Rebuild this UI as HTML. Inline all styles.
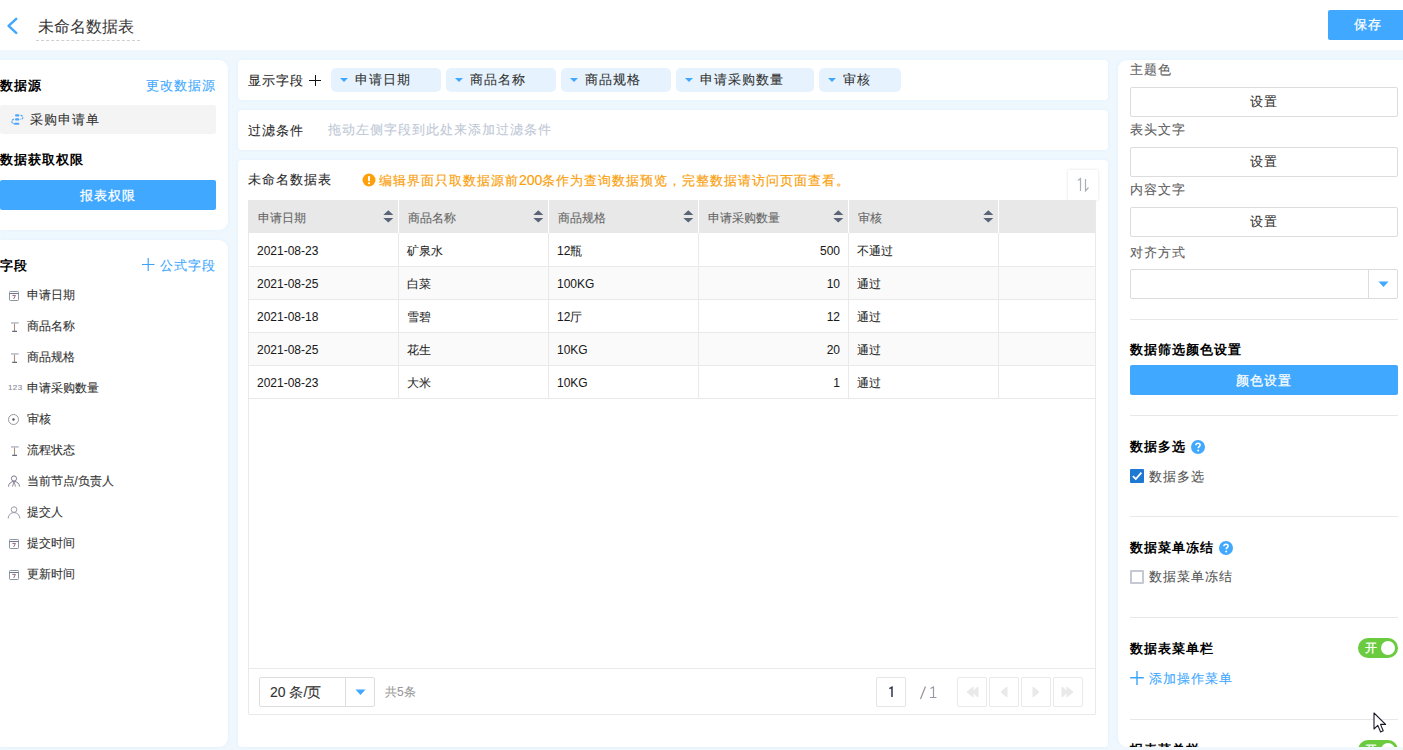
<!DOCTYPE html>
<html><head><meta charset="utf-8">
<style>
*{box-sizing:border-box;margin:0;padding:0}
html,body{width:1403px;height:750px;overflow:hidden}
body{position:relative;-webkit-text-stroke:0.1px currentColor;background:#fff;font-family:"Liberation Sans",sans-serif;color:#333;font-size:13px;letter-spacing:1px;line-height:20px;color:#2a2a2a}
.a{position:absolute;white-space:nowrap}
.bg{position:absolute;left:0;top:50px;width:1403px;height:700px;background:#f0f8fe}
.card{position:absolute;background:#fff;box-shadow:0 0 5px rgba(130,190,250,.13)}
.b{font-weight:bold;color:#000;-webkit-text-stroke:0}
.blue{color:#40a8fe}
.btnb{position:absolute;background:#40a8fe;color:#fff;text-align:center;border-radius:2px;-webkit-text-stroke:0.25px #fff}
.fld{position:absolute;left:26.5px;font-size:12px;letter-spacing:0;color:#333}
.ic{position:absolute;left:8px}

.chip{top:68px;height:24px;background:#e6f3fe;border-radius:5px;padding-left:24px;line-height:24px;color:#333}
.chip:before{content:"";position:absolute;left:9px;top:10px;border-left:4px solid transparent;border-right:4px solid transparent;border-top:4.5px solid #40a8fe}
.th{top:208px;font-size:12px;letter-spacing:0;color:#666}
.td{height:33px;line-height:33px;font-size:12px;letter-spacing:0;color:#1a1a1a;-webkit-text-stroke:0.05px #1a1a1a}
.pg{top:677px;width:30px;height:30px;border:1px solid #e9e9e9;border-radius:2px;background:#fff}
.pg svg{position:absolute;left:0;top:0}
.lbl{left:1130px;color:#606060}
.sbtn{left:1130px;width:268px;height:30px;border:1px solid #dcdcdc;border-radius:2px;background:#fff;text-align:center;line-height:28px;color:#333}
.hr{left:1130px;width:268px;height:1px;background:#e8e8e8}
.tg{left:1357.5px;width:40.5px;height:20px;border-radius:10px;background:#6bcb3f}
.tg span{position:absolute;left:7.5px;top:0;line-height:20px;font-size:12px;letter-spacing:0;color:#fff;-webkit-text-stroke:0.3px #fff}
.tg i{position:absolute;right:3px;top:3px;width:14px;height:14px;border-radius:50%;background:#fff}
</style></head><body>
<!-- header -->
<svg class="a" style="left:5px;top:17px" width="14" height="18" viewBox="0 0 14 18"><path d="M11.2 1.8 L3.6 8.8 L11.2 15.8" fill="none" stroke="#40a8fe" stroke-width="2.5" stroke-linecap="round" stroke-linejoin="round"/></svg>
<div class="a" style="left:38px;top:17px;font-size:16px;letter-spacing:0;color:#333;-webkit-text-stroke:0">未命名数据表</div>
<div class="a" style="left:36px;top:40px;width:104px;height:1px;border-top:1px dashed #d0d0d0"></div>
<div class="btnb" style="left:1328px;top:10px;width:80px;height:30px;line-height:30px;padding-right:1px">保存</div>

<div class="bg"></div>

<!-- left card 1 -->
<div class="card" style="left:0;top:60px;width:228px;height:170px;border-radius:0 9px 9px 0"></div>
<div class="a b" style="left:0;top:76px">数据源</div>
<div class="a blue" style="left:146px;top:76px">更改数据源</div>
<div class="a" style="left:0;top:105px;width:216px;height:29px;background:#f4f4f4;border-radius:3px"></div>
<div class="a" style="left:30px;top:110px;color:#333">采购申请单</div>
<div class="a b" style="left:0;top:150px">数据获取权限</div>
<div class="btnb" style="left:0;top:180px;width:216px;height:30px;line-height:31px">报表权限</div>

<!-- left card 2 -->
<div class="card" style="left:0;top:240px;width:228px;height:507px;border-radius:0 9px 9px 0"></div>
<div class="a b" style="left:0;top:256px">字段</div>
<div class="a blue" style="left:160px;top:256px">公式字段</div>
<div class="fld a" style="top:285px">申请日期</div>
<div class="fld a" style="top:316px">商品名称</div>
<div class="fld a" style="top:347px">商品规格</div>
<div class="fld a" style="top:378px">申请采购数量</div>
<div class="fld a" style="top:409px">审核</div>
<div class="fld a" style="top:440px">流程状态</div>
<div class="fld a" style="top:471px">当前节点/负责人</div>
<div class="fld a" style="top:502px">提交人</div>
<div class="fld a" style="top:533px">提交时间</div>
<div class="fld a" style="top:564px">更新时间</div>

<svg class="a" style="left:8px;top:290px" width="12" height="12" viewBox="0 0 12 12"><rect x="1.5" y="1.5" width="9" height="9" rx="0.8" fill="none" stroke="#8c96a2" stroke-width="1"/><path d="M1.5 3.5H10.5" stroke="#6e7886" stroke-width="1"/><path d="M4.4 5.4H7.4L5.7 9" fill="none" stroke="#8a6a80" stroke-width="1"/></svg><svg class="a" style="left:10px;top:321px" width="10" height="12" viewBox="0 0 10 12"><path d="M1 1.9H8.7" stroke="#b4bac6" stroke-width="1.5"/><path d="M4.5 2.6V9.8" stroke="#a89080" stroke-width="1.1"/><path d="M2.2 10.3H7" stroke="#4a5060" stroke-width="1.1"/></svg><svg class="a" style="left:10px;top:352px" width="10" height="12" viewBox="0 0 10 12"><path d="M1 1.9H8.7" stroke="#b4bac6" stroke-width="1.5"/><path d="M4.5 2.6V9.8" stroke="#a89080" stroke-width="1.1"/><path d="M2.2 10.3H7" stroke="#4a5060" stroke-width="1.1"/></svg><div class="a" style="left:8px;top:383px;font-size:8px;line-height:10px;color:#8a8a9a;letter-spacing:0.4px">123</div><svg class="a" style="left:7px;top:413px" width="13" height="13" viewBox="0 0 13 13"><circle cx="6.5" cy="6.5" r="5" fill="none" stroke="#9a96a0" stroke-width="1"/><circle cx="6.5" cy="6.5" r="1.2" fill="#556"/></svg><svg class="a" style="left:10px;top:445px" width="10" height="12" viewBox="0 0 10 12"><path d="M1 1.9H8.7" stroke="#b4bac6" stroke-width="1.5"/><path d="M4.5 2.6V9.8" stroke="#a89080" stroke-width="1.1"/><path d="M2.2 10.3H7" stroke="#4a5060" stroke-width="1.1"/></svg><svg class="a" style="left:7px;top:474px" width="14" height="14" viewBox="0 0 14 14"><circle cx="7" cy="4.5" r="2.6" fill="none" stroke="#7c7c92" stroke-width="1"/><path d="M1.4 12.6 C1.8 9.6 4 7.4 7 7.4 C10 7.4 12.2 9.6 12.6 12.6" fill="none" stroke="#7c7c92" stroke-width="1"/><path d="M5.5 12.6 L7 7.4 L8.5 12.6" fill="none" stroke="#9a9098" stroke-width="1"/></svg><svg class="a" style="left:7px;top:506px" width="14" height="13" viewBox="0 0 14 13"><circle cx="7" cy="3.6" r="2.8" fill="none" stroke="#9a9aa8" stroke-width="1"/><path d="M1.2 12.5 C1.6 8.5 4 6.6 7 6.6 C10 6.6 12.4 8.5 12.8 12.5" fill="none" stroke="#9a9aa8" stroke-width="1"/></svg><svg class="a" style="left:8px;top:538px" width="12" height="12" viewBox="0 0 12 12"><rect x="1.5" y="1.5" width="9" height="9" rx="0.8" fill="none" stroke="#8c96a2" stroke-width="1"/><path d="M1.5 3.5H10.5" stroke="#6e7886" stroke-width="1"/><path d="M4.4 5.4H7.4L5.7 9" fill="none" stroke="#8a6a80" stroke-width="1"/></svg><svg class="a" style="left:8px;top:569px" width="12" height="12" viewBox="0 0 12 12"><rect x="1.5" y="1.5" width="9" height="9" rx="0.8" fill="none" stroke="#8c96a2" stroke-width="1"/><path d="M1.5 3.5H10.5" stroke="#6e7886" stroke-width="1"/><path d="M4.4 5.4H7.4L5.7 9" fill="none" stroke="#8a6a80" stroke-width="1"/></svg><svg class="a" style="left:10px;top:113px" width="15" height="13" viewBox="0 0 15 13"><rect x="5" y="1.3" width="4.4" height="2.2" rx="1.1" fill="#4aa6f8"/><rect x="5" y="5.3" width="4.4" height="2.2" rx="1.1" fill="#4aa6f8"/><rect x="4" y="9.7" width="5.4" height="2" rx="1" fill="#4aa6f8"/><path d="M10.6 2.4 C13.6 2.4 13.6 6.4 10.6 6.4" fill="none" stroke="#4aa6f8" stroke-width="1.1" stroke-dasharray="2.2 0.8"/><path d="M4 6.4 C1.1 6.4 1.1 10.7 4 10.7" fill="none" stroke="#4aa6f8" stroke-width="1.1" stroke-dasharray="2.2 0.8"/></svg><svg class="a" style="left:141px;top:258px" width="14" height="14" viewBox="0 0 14 14"><path d="M7.2 0V13M1 6.5H13.5" stroke="#3aa3fb" stroke-width="1.15"/></svg>
<!-- middle cards -->
<div class="card" style="left:238px;top:60px;width:870px;height:40px;border-radius:4px"></div>
<div class="a" style="left:248px;top:71px">显示字段</div>
<div class="card" style="left:238px;top:110px;width:870px;height:40px;border-radius:4px"></div>
<div class="a" style="left:248px;top:121px">过滤条件</div>
<div class="a" style="left:328px;top:120px;color:#bec8d6">拖动左侧字段到此处来添加过滤条件</div>
<div class="card" style="left:238px;top:160px;width:870px;height:587px;border-radius:4px"></div>
<div class="a" style="left:248px;top:170px">未命名数据表</div>

<!-- right panel -->
<div class="card" style="left:1118px;top:60px;width:290px;height:687px;border-radius:9px 0 0 9px"></div>

<!-- chips -->
<div class="a" style="left:309px;top:68px;font-size:18px;font-weight:300;color:#333;line-height:20px">
<svg width="13" height="13" viewBox="0 0 13 13" style="position:absolute;left:0;top:6px"><path d="M6.5 1V12M0 6.5H12" stroke="#111" stroke-width="1"/></svg></div>
<div class="chip a" style="left:331px;width:110px">申请日期</div>
<div class="chip a" style="left:446px;width:110px">商品名称</div>
<div class="chip a" style="left:561px;width:110px">商品规格</div>
<div class="chip a" style="left:676px;width:138px">申请采购数量</div>
<div class="chip a" style="left:819px;width:82px">审核</div>

<!-- warning -->
<svg class="a" style="left:362px;top:173px" width="14" height="14" viewBox="0 0 14 14"><circle cx="7" cy="7" r="6.5" fill="#ff9f0a"/><rect x="6" y="3" width="2" height="5.2" rx="0.6" fill="#fff"/><rect x="6" y="9.3" width="2" height="1.9" rx="0.6" fill="#fff"/></svg>
<div class="a" style="left:379px;top:170px;color:#fa9f0c;-webkit-text-stroke:0.18px #fa9f0c">编辑界面只取数据源前<span style="letter-spacing:0;font-size:14px">200</span>条作为查询数据预览，完整数据请访问页面查看。</div>
<div class="a" style="left:1068px;top:170px;width:30px;height:30px;background:#fff;box-shadow:0 0 3px rgba(0,0,0,.12)"></div>
<svg class="a" style="left:1074px;top:177px" width="18" height="16" viewBox="0 0 18 16"><path d="M4 3.5 L6.5 1.5 V14" fill="none" stroke="#a9b0b8" stroke-width="1.2"/><path d="M11.5 2 V14 L14.5 10.5" fill="none" stroke="#a9b0b8" stroke-width="1.2"/></svg>

<!-- table -->
<div class="a" style="left:248px;top:200px;width:848px;height:515px;border:1px solid #e9e9e9;border-top:none;border-radius:0 0 2px 2px"></div>
<div class="a" style="left:248px;top:200px;width:847px;height:33px;background:#e8e8e8"></div>
<div class="th a" style="left:258px">申请日期</div><svg class="a" style="left:382.5px;top:210px" width="11" height="13" viewBox="0 0 11 13"><path d="M5.3 0.2L10.3 5H0.3z M0.3 8H10.3L5.3 12.6z" fill="#5a6678"/></svg><div class="th a" style="left:408px">商品名称</div><svg class="a" style="left:532.5px;top:210px" width="11" height="13" viewBox="0 0 11 13"><path d="M5.3 0.2L10.3 5H0.3z M0.3 8H10.3L5.3 12.6z" fill="#5a6678"/></svg><div class="th a" style="left:558px">商品规格</div><svg class="a" style="left:682.5px;top:210px" width="11" height="13" viewBox="0 0 11 13"><path d="M5.3 0.2L10.3 5H0.3z M0.3 8H10.3L5.3 12.6z" fill="#5a6678"/></svg><div class="th a" style="left:708px">申请采购数量</div><svg class="a" style="left:832.5px;top:210px" width="11" height="13" viewBox="0 0 11 13"><path d="M5.3 0.2L10.3 5H0.3z M0.3 8H10.3L5.3 12.6z" fill="#5a6678"/></svg><div class="th a" style="left:858px">审核</div><svg class="a" style="left:982.5px;top:210px" width="11" height="13" viewBox="0 0 11 13"><path d="M5.3 0.2L10.3 5H0.3z M0.3 8H10.3L5.3 12.6z" fill="#5a6678"/></svg><div class="a" style="left:398px;top:200px;width:1px;height:33px;background:#fff"></div><div class="a" style="left:398px;top:233px;width:1px;height:166px;background:#e9e9e9"></div><div class="a" style="left:548px;top:200px;width:1px;height:33px;background:#fff"></div><div class="a" style="left:548px;top:233px;width:1px;height:166px;background:#e9e9e9"></div><div class="a" style="left:698px;top:200px;width:1px;height:33px;background:#fff"></div><div class="a" style="left:698px;top:233px;width:1px;height:166px;background:#e9e9e9"></div><div class="a" style="left:848px;top:200px;width:1px;height:33px;background:#fff"></div><div class="a" style="left:848px;top:233px;width:1px;height:166px;background:#e9e9e9"></div><div class="a" style="left:998px;top:200px;width:1px;height:33px;background:#fff"></div><div class="a" style="left:998px;top:233px;width:1px;height:166px;background:#e9e9e9"></div><div class="a" style="left:249px;top:233px;width:846px;height:34px;background:#fff;border-bottom:1px solid #e9e9e9"></div><div class="a" style="left:249px;top:267px;width:846px;height:33px;background:#fafafa;border-bottom:1px solid #e9e9e9"></div><div class="a" style="left:249px;top:300px;width:846px;height:33px;background:#fff;border-bottom:1px solid #e9e9e9"></div><div class="a" style="left:249px;top:333px;width:846px;height:33px;background:#fafafa;border-bottom:1px solid #e9e9e9"></div><div class="a" style="left:249px;top:366px;width:846px;height:33px;background:#fff;border-bottom:1px solid #e9e9e9"></div><div class="td a" style="left:257px;top:235px">2021-08-23</div><div class="td a" style="left:407px;top:235px">矿泉水</div><div class="td a" style="left:557px;top:235px">12瓶</div><div class="td a" style="left:698px;top:235px;width:150px;text-align:right;padding-right:8px">500</div><div class="td a" style="left:857px;top:235px">不通过</div><div class="td a" style="left:257px;top:268px">2021-08-25</div><div class="td a" style="left:407px;top:268px">白菜</div><div class="td a" style="left:557px;top:268px">100KG</div><div class="td a" style="left:698px;top:268px;width:150px;text-align:right;padding-right:8px">10</div><div class="td a" style="left:857px;top:268px">通过</div><div class="td a" style="left:257px;top:301px">2021-08-18</div><div class="td a" style="left:407px;top:301px">雪碧</div><div class="td a" style="left:557px;top:301px">12厅</div><div class="td a" style="left:698px;top:301px;width:150px;text-align:right;padding-right:8px">12</div><div class="td a" style="left:857px;top:301px">通过</div><div class="td a" style="left:257px;top:334px">2021-08-25</div><div class="td a" style="left:407px;top:334px">花生</div><div class="td a" style="left:557px;top:334px">10KG</div><div class="td a" style="left:698px;top:334px;width:150px;text-align:right;padding-right:8px">20</div><div class="td a" style="left:857px;top:334px">通过</div><div class="td a" style="left:257px;top:367px">2021-08-23</div><div class="td a" style="left:407px;top:367px">大米</div><div class="td a" style="left:557px;top:367px">10KG</div><div class="td a" style="left:698px;top:367px;width:150px;text-align:right;padding-right:8px">1</div><div class="td a" style="left:857px;top:367px">通过</div><div class="a" style="left:398px;top:233px;width:1px;height:166px;background:#e9e9e9"></div><div class="a" style="left:548px;top:233px;width:1px;height:166px;background:#e9e9e9"></div><div class="a" style="left:698px;top:233px;width:1px;height:166px;background:#e9e9e9"></div><div class="a" style="left:848px;top:233px;width:1px;height:166px;background:#e9e9e9"></div><div class="a" style="left:998px;top:233px;width:1px;height:166px;background:#e9e9e9"></div>
<!-- footer -->
<div class="a" style="left:248px;top:668px;width:848px;height:1px;background:#e9e9e9"></div>
<div class="a" style="left:259px;top:677px;width:116px;height:30px;border:1px solid #ddd;border-radius:2px;background:#fff"></div>
<div class="a" style="left:345px;top:678px;width:1px;height:28px;background:#ddd"></div>
<div class="a" style="left:270px;top:682px;font-size:14px;letter-spacing:0;color:#333">20 条/页</div>
<svg class="a" style="left:355px;top:689px" width="11" height="7" viewBox="0 0 11 7"><path d="M0.5 0.5H10.5L5.5 6z" fill="#40a8fe"/></svg>
<div class="a" style="left:385px;top:682px;font-size:12px;letter-spacing:0;color:#999">共5条</div>
<div class="a" style="left:876px;top:677px;width:30px;height:30px;border:1px solid #e4e4e4;border-radius:2px;background:#fff"></div>
<svg class="a" style="left:886px;top:685px" width="10" height="14" viewBox="0 0 10 14"><path d="M3.4 3.6 L6 2.2 V12" fill="none" stroke="#223044" stroke-width="1.45"/></svg>
<svg class="a" style="left:918px;top:685px" width="22" height="16" viewBox="0 0 22 16"><path d="M2.5 14 L7.5 1.5" stroke="#a09090" stroke-width="1.2"/><path d="M12.5 3.5 L15.5 2 V12.5 M12 12.5 H18.5" fill="none" stroke="#9a98a8" stroke-width="1.2"/></svg>
<div class="pg a" style="left:957px"><svg width="28" height="28" viewBox="0 0 28 28"><path d="M9 14 L15 9 V19z M14 14 L20 9 V19z" fill="#e9e9e9" stroke="#e9e9e9" stroke-width="1" stroke-linejoin="round"/></svg></div>
<div class="pg a" style="left:989px"><svg width="28" height="28" viewBox="0 0 28 28"><path d="M11 14 L17 9 V19z" fill="#e9e9e9" stroke="#e9e9e9" stroke-width="1" stroke-linejoin="round"/></svg></div>
<div class="pg a" style="left:1021px"><svg width="28" height="28" viewBox="0 0 28 28"><path d="M17 14 L11 9 V19z" fill="#e9e9e9" stroke="#e9e9e9" stroke-width="1" stroke-linejoin="round"/></svg></div>
<div class="pg a" style="left:1053px"><svg width="28" height="28" viewBox="0 0 28 28"><path d="M19 14 L13 9 V19z M14 14 L8 9 V19z" fill="#e9e9e9" stroke="#e9e9e9" stroke-width="1" stroke-linejoin="round"/></svg></div>

<!-- right panel content -->
<div class="a lbl" style="top:60px">主题色</div>
<div class="sbtn a" style="top:87px">设置</div>
<div class="a lbl" style="top:120px">表头文字</div>
<div class="sbtn a" style="top:147px">设置</div>
<div class="a lbl" style="top:180px">内容文字</div>
<div class="sbtn a" style="top:207px">设置</div>
<div class="a lbl" style="top:243px">对齐方式</div>
<div class="sbtn a" style="top:269px"></div>
<div class="a" style="left:1368px;top:270px;width:1px;height:28px;background:#ddd"></div>
<svg class="a" style="left:1378px;top:281px" width="11" height="7" viewBox="0 0 11 7"><path d="M0.5 0.5H10.5L5.5 6z" fill="#40a8fe"/></svg>
<div class="hr a" style="top:319px"></div>
<div class="a b" style="left:1130px;top:340px">数据筛选颜色设置</div>
<div class="btnb" style="left:1130px;top:365px;width:268px;height:30px;line-height:31px;padding-right:1px">颜色设置</div>
<div class="hr a" style="top:415px"></div>
<div class="a b" style="left:1130px;top:437px">数据多选</div>
<svg class="a qm" style="left:1191px;top:440px" width="14" height="14" viewBox="0 0 14 14"><circle cx="7" cy="7" r="7" fill="#40a8fe"/><path d="M4.9 5.3 C4.9 3.9 5.9 3.2 7 3.2 C8.2 3.2 9.1 4 9.1 5.1 C9.1 6.5 7.2 6.6 7.2 8.2" fill="none" stroke="#fff" stroke-width="1.6"/><circle cx="7.2" cy="10.4" r="1" fill="#fff"/></svg>
<div class="a" style="left:1130px;top:469px;width:14px;height:14px;background:#1f78d1;border-radius:1px"></div>
<svg class="a" style="left:1130px;top:469px" width="14" height="14" viewBox="0 0 14 14"><path d="M2.8 7.2 L5.8 10 L11.4 3.6" fill="none" stroke="#fff" stroke-width="1.8"/></svg>
<div class="a" style="left:1149px;top:467px;color:#555">数据多选</div>
<div class="hr a" style="top:516px"></div>
<div class="a b" style="left:1130px;top:538px">数据菜单冻结</div>
<svg class="a qm" style="left:1219px;top:541px" width="14" height="14" viewBox="0 0 14 14"><circle cx="7" cy="7" r="7" fill="#40a8fe"/><path d="M4.9 5.3 C4.9 3.9 5.9 3.2 7 3.2 C8.2 3.2 9.1 4 9.1 5.1 C9.1 6.5 7.2 6.6 7.2 8.2" fill="none" stroke="#fff" stroke-width="1.6"/><circle cx="7.2" cy="10.4" r="1" fill="#fff"/></svg>
<div class="a" style="left:1130px;top:570px;width:14px;height:14px;border:2px solid #c5c9d3;border-radius:1px;background:#fff"></div>
<div class="a" style="left:1149px;top:567px;color:#555">数据菜单冻结</div>
<div class="hr a" style="top:617px"></div>
<div class="a b" style="left:1130px;top:639px">数据表菜单栏</div>
<div class="tg a" style="top:638px"><span>开</span><i></i></div>
<svg class="a" style="left:1130px;top:671px" width="14" height="14" viewBox="0 0 14 14"><path d="M7 0V14M0.2 6.7H13.8" stroke="#3aa3fb" stroke-width="1.4"/></svg>
<div class="a blue" style="left:1149px;top:669px">添加操作菜单</div>
<div class="hr a" style="top:719px"></div>
<div class="a b" style="left:1130px;top:740px">报表菜单栏</div>
<div class="tg a" style="top:740px"><span>开</span><i></i></div>
<div class="a" style="left:1118px;top:747px;width:285px;height:3px;background:#f0f8fe"></div>
<svg class="a" style="left:1373px;top:712px" width="16" height="22" viewBox="0 0 16 22"><path d="M1 1 V17 L4.8 13.4 L7.6 20 L10.2 18.8 L7.5 12.4 H12.6 Z" fill="#fff" stroke="#1a1a2a" stroke-width="1.1" stroke-linejoin="round"/></svg>
</body></html>
